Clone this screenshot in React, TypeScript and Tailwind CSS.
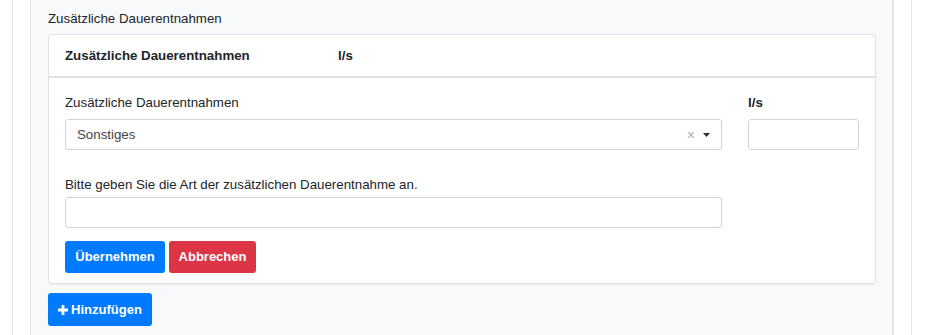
import React from "react";

export default function App() {
  return (
    <div
      className="w-[925px] h-[335px] bg-white overflow-hidden text-[13.3px] text-[#212529]"
      style={{ fontFamily: '"Liberation Sans", Arial, sans-serif' }}
    >
      <div className="ml-[12px] w-[900px] h-[335px] border-x border-[#e4e4e4] px-[17px]">
        <div className="h-[335px] bg-[#f8f9fa] border-l border-r-2 border-[#e1e3e5] pl-[17px] pr-[16px] pt-[9px]">
          <div className="leading-[19px] h-[25px]">Zusätzliche Dauerentnahmen</div>
          <div className="bg-white border border-[#dee2e6] rounded-[4px] shadow-[0_1px_1px_rgba(0,0,0,0.05)]">
            <div className="h-[43px] flex items-center px-[16px] border-b-2 border-[#dee2e6] font-bold">
              <div className="w-[273px]">Zusätzliche Dauerentnahmen</div>
              <div>l/s</div>
            </div>
            <div className="px-[16px] pt-[15px] pb-[10px]">
              <div className="flex gap-[26px]">
                <div className="w-[657px]">
                  <div className="leading-[19px] mb-[7px]">Zusätzliche Dauerentnahmen</div>
                  <div className="h-[31px] border border-[#ced4da] rounded-[3px] flex items-center pl-[11px] pr-[11px] text-[#444]">
                    <span className="flex-1">Sonstiges</span>
                    <span className="text-[#aaa] text-[14px] mr-[8px] leading-none">×</span>
                    <svg width="7" height="4" viewBox="0 0 7 4">
                      <path d="M0 0 L7 0 L3.5 4 Z" fill="#333" />
                    </svg>
                  </div>
                </div>
                <div className="w-[111px]">
                  <div className="leading-[19px] mb-[7px] font-bold">l/s</div>
                  <div className="h-[31px] border border-[#ced4da] rounded-[3px]" />
                </div>
              </div>
              <div className="mt-[25px] w-[657px]">
                <div className="leading-[19px] mb-[3px]">Bitte geben Sie die Art der zusätzlichen Dauerentnahme an.</div>
                <div className="h-[31px] border border-[#ced4da] rounded-[3px]" />
              </div>
              <div className="mt-[13px] flex gap-[4px]">
                <button className="h-[32px] w-[100px] bg-[#007bff] text-white font-bold rounded-[3px] text-[13px]">
                  Übernehmen
                </button>
                <button className="h-[32px] w-[87px] bg-[#dc3545] text-white font-bold rounded-[3px] text-[13px]">
                  Abbrechen
                </button>
              </div>
            </div>
          </div>
          <div className="mt-[9px]">
            <button className="h-[33px] w-[104px] bg-[#007bff] text-white font-bold rounded-[3px] text-[13px] flex items-center justify-center gap-[3px]">
              <svg width="10" height="10" viewBox="0 0 10 10">
                <path d="M3.6 0 H6.4 V3.6 H10 V6.4 H6.4 V10 H3.6 V6.4 H0 V3.6 H3.6 Z" fill="white" />
              </svg>
              Hinzufügen
            </button>
          </div>
        </div>
      </div>
    </div>
  );
}
